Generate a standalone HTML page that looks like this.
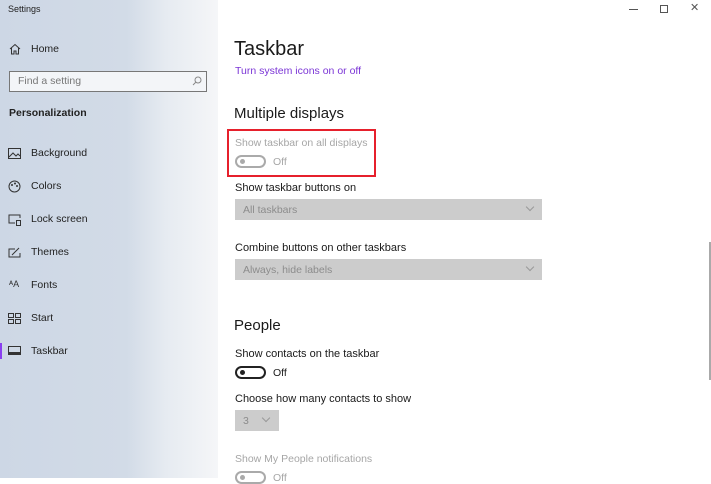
<!DOCTYPE html>
<html><head><meta charset="utf-8"><style>
*{margin:0;padding:0;box-sizing:border-box}
body{width:711px;height:478px;overflow:hidden;background:#fff;font-family:"Liberation Sans",sans-serif;position:relative;color:#1a1a1a}
.side{position:absolute;left:0;top:0;width:218px;height:478px;background:linear-gradient(90deg,#cdd7e5 0%,#d2dbe7 58%,#e6ebf1 76%,#f5f6f8 100%)}
.t{position:absolute;white-space:nowrap;line-height:1}
.s{font-size:11px}
.n{font-size:10.5px;color:#222}
.dd{position:absolute;background:#cccccc;height:21px}
.dd span{position:absolute;left:8px;top:5px;font-size:10.5px;color:#8c8c8c}
.chev{position:absolute;top:7px;width:6px;height:6px;border-right:1px solid #999;border-bottom:1px solid #999;transform:rotate(45deg)}
.tg{position:absolute;width:31px;height:13px;border-radius:7px;border:2px solid #222}
.tg i{position:absolute;left:3px;top:2px;width:5px;height:5px;border-radius:50%;background:#222}
</style></head><body>
<div class="side">
<div class="t" style="left:8px;top:5px;font-size:9px;color:#222">Settings</div>
<svg style="position:absolute;left:9px;top:43px" width="12" height="12" viewBox="0 0 12 12"><path d="M1 6 L6 1.5 L11 6 M2.5 5 V11 H5 V8 H7 V11 H9.5 V5" fill="none" stroke="#333" stroke-width="1"/></svg>
<div class="t n" style="left:31px;top:44px">Home</div>
<div style="position:absolute;left:9px;top:71px;width:198px;height:21px;border:1px solid #777;background:#f3f5f8"></div>
<div class="t" style="left:18px;top:76px;font-size:10.5px;color:#777">Find a setting</div>
<svg style="position:absolute;left:192px;top:76px" width="10" height="10" viewBox="0 0 10 10"><circle cx="6" cy="4" r="3" fill="none" stroke="#888"/><path d="M4 6 L1 9" stroke="#888"/></svg>
<div class="t" style="left:9px;top:108px;font-size:10.5px;font-weight:bold;color:#222">Personalization</div>
<svg style="position:absolute;left:8px;top:148px" width="13" height="11"><rect x=".5" y=".5" width="12" height="10" fill="none" stroke="#333"/><path d="M1 9 L5 5 L8 8 L10 6 L12 8" fill="none" stroke="#333"/></svg>
<div class="t n" style="left:31px;top:148px">Background</div>
<svg style="position:absolute;left:8px;top:180px" width="13" height="13"><circle cx="6.5" cy="6.5" r="5.5" fill="none" stroke="#333"/><circle cx="4" cy="5" r="1" fill="#333"/><circle cx="7" cy="3.5" r="1" fill="#333"/><circle cx="9" cy="6" r="1" fill="#333"/></svg>
<div class="t n" style="left:31px;top:181px">Colors</div>
<svg style="position:absolute;left:8px;top:214px" width="13" height="12"><path d="M12 4 V1 H1 V9 H7" fill="none" stroke="#333"/><rect x="8.5" y="6.5" width="4" height="5" fill="none" stroke="#333"/></svg>
<div class="t n" style="left:31px;top:214px">Lock screen</div>
<svg style="position:absolute;left:8px;top:247px" width="13" height="12"><path d="M7 2 H1 V10 H12 V6 M4 8 L11 1" fill="none" stroke="#333"/></svg>
<div class="t n" style="left:31px;top:247px">Themes</div>
<div class="t" style="left:9px;top:280px;font-size:9px;color:#333">ᴬA</div>
<div class="t n" style="left:31px;top:280px">Fonts</div>
<svg style="position:absolute;left:8px;top:313px" width="13" height="11"><rect x=".5" y=".5" width="5" height="4" fill="none" stroke="#333"/><rect x="7.5" y=".5" width="5" height="4" fill="none" stroke="#333"/><rect x=".5" y="6.5" width="5" height="4" fill="none" stroke="#333"/><rect x="7.5" y="6.5" width="5" height="4" fill="none" stroke="#333"/></svg>
<div class="t n" style="left:31px;top:313px">Start</div>
<div style="position:absolute;left:0;top:343px;width:2px;height:16px;background:#8a3ff0"></div>
<svg style="position:absolute;left:8px;top:346px" width="13" height="9"><rect x=".5" y=".5" width="12" height="8" fill="none" stroke="#333"/><rect x="1" y="6" width="11" height="2" fill="#333"/></svg>
<div class="t n" style="left:31px;top:346px">Taskbar</div>
</div>
<div style="position:absolute;left:629px;top:9px;width:9px;height:1px;background:#555"></div>
<div style="position:absolute;left:660px;top:5px;width:8px;height:8px;border:1px solid #555"></div>
<div class="t" style="left:690px;top:3px;font-size:11px;color:#555">✕</div>
<div style="position:absolute;left:709px;top:242px;width:1.5px;height:138px;background:#aaa"></div>
<div class="t" style="left:234px;top:39px;font-size:20px;color:#1a1a1a">Taskbar</div>
<div class="t" style="left:235px;top:66px;font-size:10.5px;color:#7b35d6">Turn system icons on or off</div>
<div class="t" style="left:234px;top:106px;font-size:15px">Multiple displays</div>
<div style="position:absolute;left:227px;top:129px;width:149px;height:48px;border:2px solid #e6202c"></div>
<div class="t" style="left:235px;top:138px;font-size:10.5px;color:#a6a6a6">Show taskbar on all displays</div>
<div class="tg" style="left:235px;top:155px;border-color:#aaa"><i style="background:#aaa"></i></div>
<div class="t" style="left:273px;top:157px;font-size:10.5px;color:#a6a6a6">Off</div>
<div class="t s" style="left:235px;top:183px">Show taskbar buttons on</div>
<div class="dd" style="left:235px;top:199px;width:307px"><span>All taskbars</span><div class="chev" style="right:9px;top:5px"></div></div>
<div class="t s" style="left:235px;top:243px">Combine buttons on other taskbars</div>
<div class="dd" style="left:235px;top:259px;width:307px"><span>Always, hide labels</span><div class="chev" style="right:9px;top:5px"></div></div>
<div class="t" style="left:234px;top:318px;font-size:15px">People</div>
<div class="t s" style="left:235px;top:349px">Show contacts on the taskbar</div>
<div class="tg" style="left:235px;top:366px"><i></i></div>
<div class="t" style="left:273px;top:368px;font-size:10.5px">Off</div>
<div class="t s" style="left:235px;top:394px">Choose how many contacts to show</div>
<div class="dd" style="left:235px;top:410px;width:44px"><span>3</span><div class="chev" style="left:28px;top:5px"></div></div>
<div class="t" style="left:235px;top:454px;font-size:10.5px;color:#a6a6a6">Show My People notifications</div>
<div class="tg" style="left:235px;top:471px;border-color:#aaa"><i style="background:#aaa"></i></div>
<div class="t" style="left:273px;top:473px;font-size:10.5px;color:#a6a6a6">Off</div>
</body></html>
